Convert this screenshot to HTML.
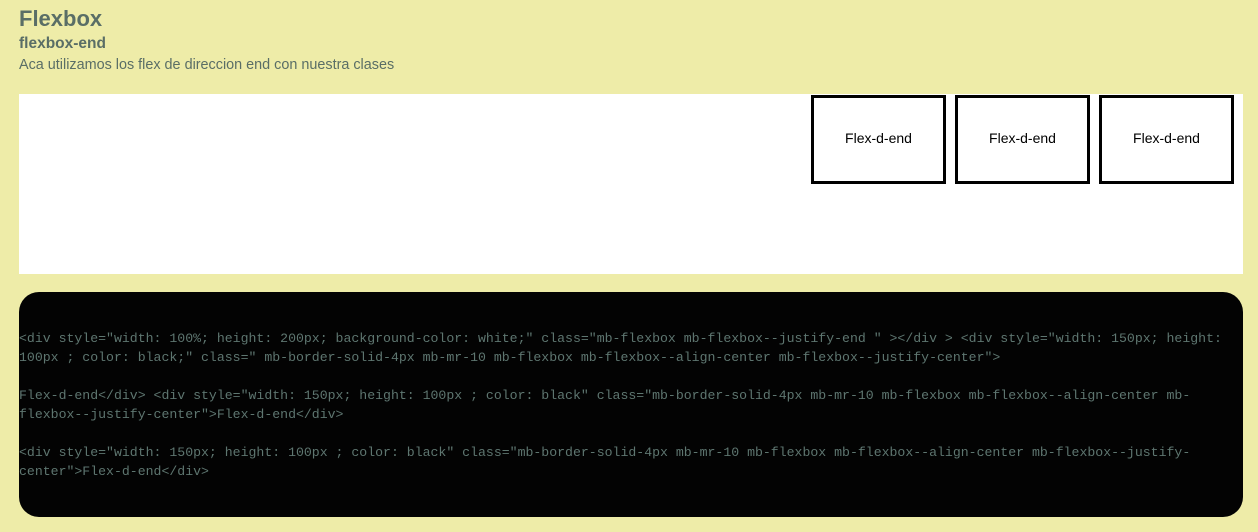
<!DOCTYPE html>
<html><head><style>
body{margin:0;background:#eeeca8;font-family:"Liberation Sans",sans-serif;color:#5a6e66;width:1258px;height:532px;overflow:hidden}
h1{position:absolute;left:19px;top:6px;margin:0;font-size:22px;font-weight:bold}
h2{position:absolute;left:19px;top:35px;margin:0;font-size:15.5px;font-weight:bold}
p.d{position:absolute;left:19px;top:57px;margin:0;font-size:14.4px}
.w{position:absolute;left:19px;top:94px;width:1224px;height:180px;background:#fff}
.b{position:absolute;top:1px;width:129px;height:83px;border:3px solid #000;color:#000;font-size:14px;display:flex;align-items:center;justify-content:center;padding-bottom:4px;box-sizing:content-box;height:79px}
.c{position:absolute;left:19px;top:292px;width:1224px;height:225px;background:#030303;border-radius:20px}
.c pre{margin:0;position:absolute;left:0;top:37px;font-family:"Liberation Mono",monospace;font-size:13.2px;line-height:19px;color:#5e7670;white-space:pre}
</style></head><body>
<h1>Flexbox</h1>
<h2>flexbox-end</h2>
<p class="d">Aca utilizamos los flex de direccion end con nuestra clases</p>
<div class="w">
<div class="b" style="left:792px">Flex-d-end</div>
<div class="b" style="left:936px">Flex-d-end</div>
<div class="b" style="left:1080px">Flex-d-end</div>
</div>
<div class="c"><pre>&lt;div style="width: 100%; height: 200px; background-color: white;" class="mb-flexbox mb-flexbox--justify-end " &gt;&lt;/div &gt; &lt;div style="width: 150px; height:
100px ; color: black;" class=" mb-border-solid-4px mb-mr-10 mb-flexbox mb-flexbox--align-center mb-flexbox--justify-center"&gt;

Flex-d-end&lt;/div&gt; &lt;div style="width: 150px; height: 100px ; color: black" class="mb-border-solid-4px mb-mr-10 mb-flexbox mb-flexbox--align-center mb-
flexbox--justify-center"&gt;Flex-d-end&lt;/div&gt;

&lt;div style="width: 150px; height: 100px ; color: black" class="mb-border-solid-4px mb-mr-10 mb-flexbox mb-flexbox--align-center mb-flexbox--justify-
center"&gt;Flex-d-end&lt;/div&gt;</pre></div>
</body></html>
